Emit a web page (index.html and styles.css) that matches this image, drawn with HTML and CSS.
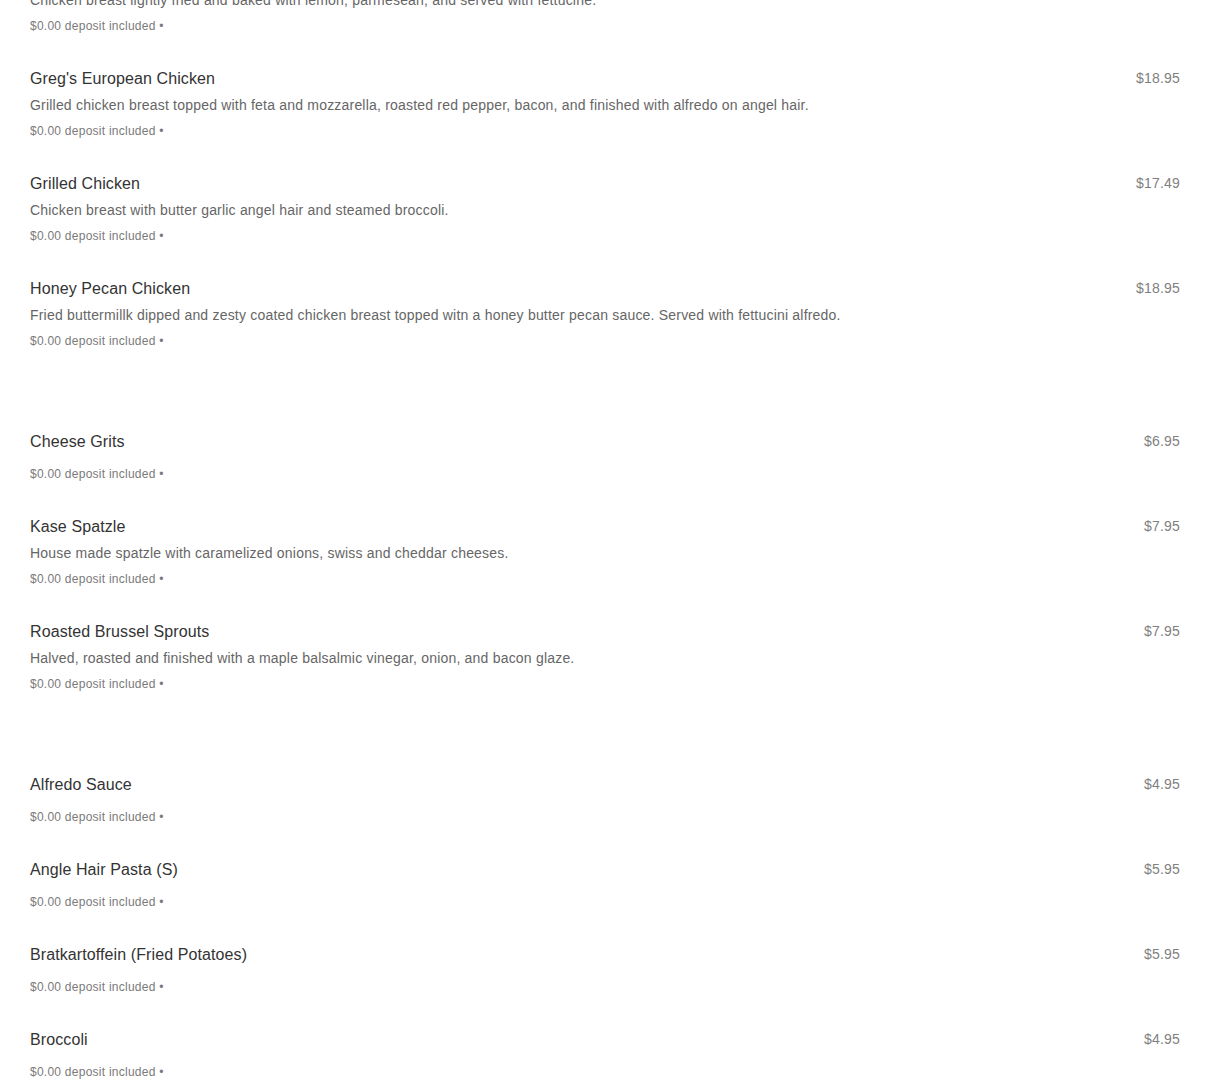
FILE: index.html
```html
<!DOCTYPE html>
<html>
<head>
<meta charset="utf-8">
<link rel="stylesheet" href="styles.css">
</head>
<body>
<div class="menu">
  <section class="section">
    <div class="item">
      <div class="info">
        <div class="title">Chicken Piccata</div>
        <div class="desc">Chicken breast lightly fried and baked with lemon, parmesean, and served with fettucine.</div>
        <div class="deposit">$0.00 deposit included •</div>
      </div>
      <div class="price">$18.95</div>
    </div>
    <div class="item">
      <div class="info">
        <div class="title">Greg's European Chicken</div>
        <div class="desc">Grilled chicken breast topped with feta and mozzarella, roasted red pepper, bacon, and finished with alfredo on angel hair.</div>
        <div class="deposit">$0.00 deposit included •</div>
      </div>
      <div class="price">$18.95</div>
    </div>
    <div class="item">
      <div class="info">
        <div class="title">Grilled Chicken</div>
        <div class="desc">Chicken breast with butter garlic angel hair and steamed broccoli.</div>
        <div class="deposit">$0.00 deposit included •</div>
      </div>
      <div class="price">$17.49</div>
    </div>
    <div class="item">
      <div class="info">
        <div class="title">Honey Pecan Chicken</div>
        <div class="desc">Fried buttermillk dipped and zesty coated chicken breast topped witn a honey butter pecan sauce. Served with fettucini alfredo.</div>
        <div class="deposit">$0.00 deposit included •</div>
      </div>
      <div class="price">$18.95</div>
    </div>
  </section>
  <section class="section">
    <div class="item">
      <div class="info">
        <div class="title">Cheese Grits</div>
        <div class="deposit">$0.00 deposit included •</div>
      </div>
      <div class="price">$6.95</div>
    </div>
    <div class="item">
      <div class="info">
        <div class="title">Kase Spatzle</div>
        <div class="desc">House made spatzle with caramelized onions, swiss and cheddar cheeses.</div>
        <div class="deposit">$0.00 deposit included •</div>
      </div>
      <div class="price">$7.95</div>
    </div>
    <div class="item">
      <div class="info">
        <div class="title">Roasted Brussel Sprouts</div>
        <div class="desc">Halved, roasted and finished with a maple balsalmic vinegar, onion, and bacon glaze.</div>
        <div class="deposit">$0.00 deposit included •</div>
      </div>
      <div class="price">$7.95</div>
    </div>
  </section>
  <section class="section">
    <div class="item">
      <div class="info">
        <div class="title">Alfredo Sauce</div>
        <div class="deposit">$0.00 deposit included •</div>
      </div>
      <div class="price">$4.95</div>
    </div>
    <div class="item">
      <div class="info">
        <div class="title">Angle Hair Pasta (S)</div>
        <div class="deposit">$0.00 deposit included •</div>
      </div>
      <div class="price">$5.95</div>
    </div>
    <div class="item">
      <div class="info">
        <div class="title">Bratkartoffein (Fried Potatoes)</div>
        <div class="deposit">$0.00 deposit included •</div>
      </div>
      <div class="price">$5.95</div>
    </div>
    <div class="item">
      <div class="info">
        <div class="title">Broccoli</div>
        <div class="deposit">$0.00 deposit included •</div>
      </div>
      <div class="price">$4.95</div>
    </div>
  </section>
</div>
</body>
</html>
```
FILE: styles.css
```css
html, body {
  margin: 0;
  padding: 0;
  background: #fff;
  overflow: hidden;
}
body {
  font-family: "Liberation Sans", Arial, sans-serif;
  color: #333;
}
.menu {
  margin-top: -53px;
  padding: 0 30px;
}
.section {
  margin-bottom: 48px;
}
.item {
  display: flex;
  justify-content: space-between;
  align-items: flex-start;
  padding: 15px 0 16px;
}
.info {
  flex: 1;
  min-width: 0;
}
.title {
  font-size: 16px;
  line-height: 24px;
  letter-spacing: 0.1px;
  color: #333;
}
.desc {
  font-size: 14px;
  line-height: 20px;
  margin-top: 4px;
  letter-spacing: 0.2px;
  color: #666;
}
.deposit {
  font-size: 12px;
  line-height: 20px;
  margin-top: 10px;
  letter-spacing: 0.25px;
  color: #7a7a7a;
}
.desc + .deposit {
  margin-top: 6px;
}
.price {
  font-size: 14px;
  line-height: 20px;
  padding-top: 1px;
  letter-spacing: 0.2px;
  color: #808080;
  padding-left: 20px;
  white-space: nowrap;
}
```
